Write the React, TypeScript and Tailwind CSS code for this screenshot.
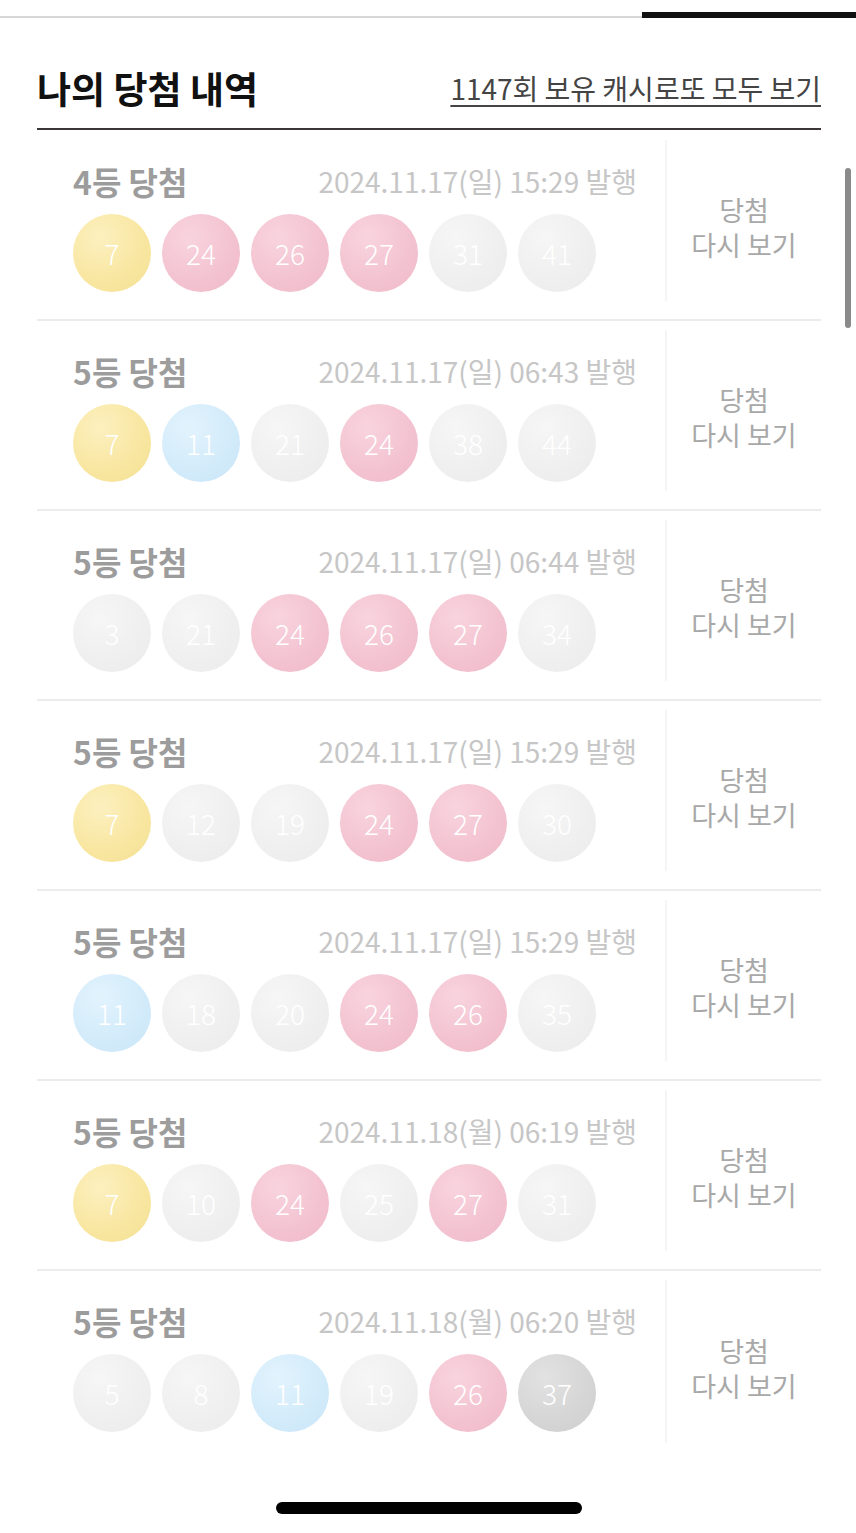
import React from "react";

type C = "y" | "p" | "b" | "g" | "d";
const ballCls: Record<C, string> = {
  y: "bg-[radial-gradient(circle_at_35%_30%,#fcf0bf_0%,#f8e6a0_60%,#f5e094_100%)]",
  p: "bg-[radial-gradient(circle_at_35%_30%,#f8d4de_0%,#f3c2d0_60%,#efb9c8_100%)]",
  b: "bg-[radial-gradient(circle_at_35%_30%,#e2f3fd_0%,#d2ebfa_60%,#c8e5f8_100%)]",
  g: "bg-[radial-gradient(circle_at_35%_30%,#f6f6f6_0%,#efefef_60%,#ebebeb_100%)]",
  d: "bg-[radial-gradient(circle_at_35%_30%,#e2e2e2_0%,#d5d5d5_60%,#cecece_100%)]",
};

const rows: { rank: string; date: string; balls: [number, C][] }[] = [
  { rank: "4등 당첨", date: "2024.11.17(일) 15:29 발행", balls: [[7, "y"], [24, "p"], [26, "p"], [27, "p"], [31, "g"], [41, "g"]] },
  { rank: "5등 당첨", date: "2024.11.17(일) 06:43 발행", balls: [[7, "y"], [11, "b"], [21, "g"], [24, "p"], [38, "g"], [44, "g"]] },
  { rank: "5등 당첨", date: "2024.11.17(일) 06:44 발행", balls: [[3, "g"], [21, "g"], [24, "p"], [26, "p"], [27, "p"], [34, "g"]] },
  { rank: "5등 당첨", date: "2024.11.17(일) 15:29 발행", balls: [[7, "y"], [12, "g"], [19, "g"], [24, "p"], [27, "p"], [30, "g"]] },
  { rank: "5등 당첨", date: "2024.11.17(일) 15:29 발행", balls: [[11, "b"], [18, "g"], [20, "g"], [24, "p"], [26, "p"], [35, "g"]] },
  { rank: "5등 당첨", date: "2024.11.18(월) 06:19 발행", balls: [[7, "y"], [10, "g"], [24, "p"], [25, "g"], [27, "p"], [31, "g"]] },
  { rank: "5등 당첨", date: "2024.11.18(월) 06:20 발행", balls: [[5, "g"], [8, "g"], [11, "b"], [19, "g"], [26, "p"], [37, "d"]] },
];

export default function App() {
  return (
    <div className="relative h-[1533px] w-[856px] overflow-hidden bg-white font-['Noto_Sans_CJK_KR','Noto_Sans',sans-serif]">
      <div className="flex h-[18px] items-end">
        <div className="h-[2px] flex-1 bg-[#d6d6d6]" />
        <div className="h-[6px] w-[214px] bg-[#111]" />
      </div>
      <div className="flex h-[110px] items-center justify-between pl-[37px] pr-[35px] pt-[30px]">
        <div className="text-[37px] font-semibold leading-[44px] text-[#111]">나의 당첨 내역</div>
        <div className="text-[28px] leading-[36px] text-[#444] underline decoration-[2px] underline-offset-[5px]">
          1147회 보유 캐시로또 모두 보기
        </div>
      </div>
      <div className="ml-[37px] mr-[35px] h-[2px] bg-[#3d3638]" />
      <div className="ml-[37px] mr-[35px] flex flex-col pt-[1px]">
        {rows.map((r, i) => (
          <div
            key={i}
            className={
              i < rows.length - 1
                ? "flex h-[190px] border-b-2 border-[#ececec]"
                : "flex h-[190px]"
            }
          >
            <div className="flex w-[628px] flex-col pl-[36px] pr-[28px] pt-[30px]">
              <div className="flex items-center justify-between">
                <div className="text-[32px] font-semibold leading-[40px] text-[#9c9c9c]">{r.rank}</div>
                <div className="text-[28px] leading-[40px] text-[#c6c6c6]">{r.date}</div>
              </div>
              <div className="mt-[13px] flex gap-[11px]">
                {r.balls.map(([n, c], j) => (
                  <div
                    key={j}
                    className={`flex h-[78px] w-[78px] items-center justify-center rounded-full text-[28px] font-light text-white ${ballCls[c]}`}
                  >
                    {n}
                  </div>
                ))}
              </div>
            </div>
            <div className="mb-[18px] mt-[9px] flex flex-1 items-center justify-center border-l-2 border-[#f5f5f5] pt-[12px] text-center text-[27px] leading-[35px] text-[#a8a8a8]">
              <p>
                당첨
                <br />
                다시 보기
              </p>
            </div>
          </div>
        ))}
      </div>
      <div className="absolute left-[845px] top-[168px] h-[160px] w-[6px] rounded-full bg-[#8a8a8a]" />
      <div className="absolute bottom-[19px] left-[276px] h-[12px] w-[306px] rounded-full bg-black" />
    </div>
  );
}
